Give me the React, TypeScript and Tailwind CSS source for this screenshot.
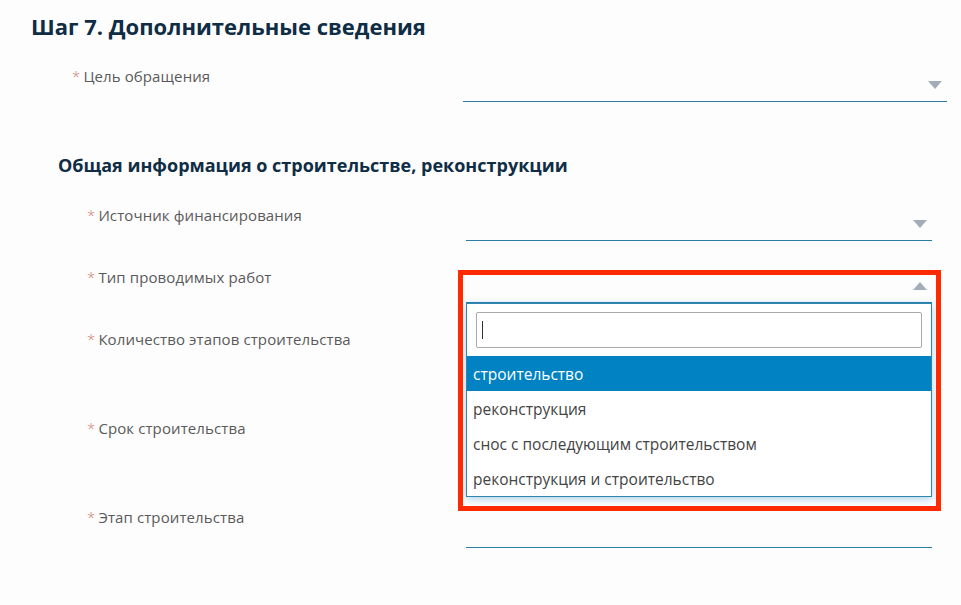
import React from "react";

const font = { fontFamily: '"Open Sans", "Noto Sans", sans-serif' };

const Arrow = ({ up = false }: { up?: boolean }) => (
  <svg width="14" height="8" viewBox="0 0 14 8" className="absolute right-[5px]">
    {up ? <polygon points="0,8 14,8 7,0" fill="#a3adb8" /> : <polygon points="0,0 14,0 7,8" fill="#a3adb8" />}
  </svg>
);

const Label = ({ text }: { text: string }) => (
  <div className="leading-5 text-[15px] text-[#5a5a5a] tracking-[0.1px]">
    <span className="text-[#d4786b] font-light mr-[3px]">*</span>
    {text}
  </div>
);

const Select = ({
  tall = false,
  up = false,
  arrow = true,
  children,
}: {
  tall?: boolean;
  up?: boolean;
  arrow?: boolean;
  children?: React.ReactNode;
}) => (
  <div className="relative flex-1">
    <div className={`relative flex items-center border-b border-[#2a7ea3] ${tall ? "h-[41px]" : "h-[36px]"}`}>
      {arrow && (
        <div className="absolute right-0 top-[15px] w-full flex justify-end">
          <Arrow up={up} />
        </div>
      )}
    </div>
    {children}
  </div>
);

const options = [
  "строительство",
  "реконструкция",
  "снос с последующим строительством",
  "реконструкция и строительство",
];

const Dropdown = () => (
  <>
    <div className="absolute left-[-8px] right-[-9px] top-[3px] h-[241px] border-[5px] border-[#ff2a00] z-20 pointer-events-none" />
    <div className="absolute left-0 right-0 top-[36px] bg-white border border-[#2f86b0] shadow-[0_2px_8px_rgba(30,130,200,0.35)] z-10">
      <div className="px-[9px] pt-[8px] pb-[8px]">
        <div className="h-[36px] border border-[#a9a9a9] rounded-[2px] bg-white flex items-center pl-[5px]">
          <div className="w-px h-[18px] bg-[#333]" />
        </div>
      </div>
      {options.map((o, i) => (
        <div
          key={o}
          className={`h-[35px] flex items-center pl-[6px] pt-[2px] text-[15.5px] ${
            i === 0 ? "bg-[#0082c3] text-white" : "text-[#444]"
          }`}
        >
          {o}
        </div>
      ))}
    </div>
  </>
);

export default function App() {
  return (
    <div className="w-[961px] h-[605px] bg-[#fdfdfd] overflow-hidden" style={font}>
      <h1 className="pt-[11px] pl-[31px] text-[22px] leading-[30px] font-bold text-[#0f2d45]">
        Шаг 7. Дополнительные сведения
      </h1>

      <div className="mt-[25px] h-[87px] flex pl-[72px] pr-[14px]">
        <div className="w-[391px]">
          <Label text="Цель обращения" />
        </div>
        <Select />
      </div>

      <h2 className="pl-[58px] text-[18px] leading-6 font-bold text-[#0f2d45]">
        Общая информация о строительстве, реконструкции
      </h2>

      <div className="mt-[28px] pl-[87px] pr-[29px]">
        <div className="h-[62px] flex">
          <div className="w-[379px]">
            <Label text="Источник финансирования" />
          </div>
          <Select />
        </div>
        <div className="h-[62px] flex relative z-10">
          <div className="w-[379px]">
            <Label text="Тип проводимых работ" />
          </div>
          <Select up>
            <Dropdown />
          </Select>
        </div>
        <div className="h-[89px] flex">
          <div className="w-[379px]">
            <Label text="Количество этапов строительства" />
          </div>
          <Select />
        </div>
        <div className="h-[89px] flex">
          <div className="w-[379px]">
            <Label text="Срок строительства" />
          </div>
          <Select />
        </div>
        <div className="h-[62px] flex">
          <div className="w-[379px]">
            <Label text="Этап строительства" />
          </div>
          <Select tall arrow={false} />
        </div>
      </div>
    </div>
  );
}
